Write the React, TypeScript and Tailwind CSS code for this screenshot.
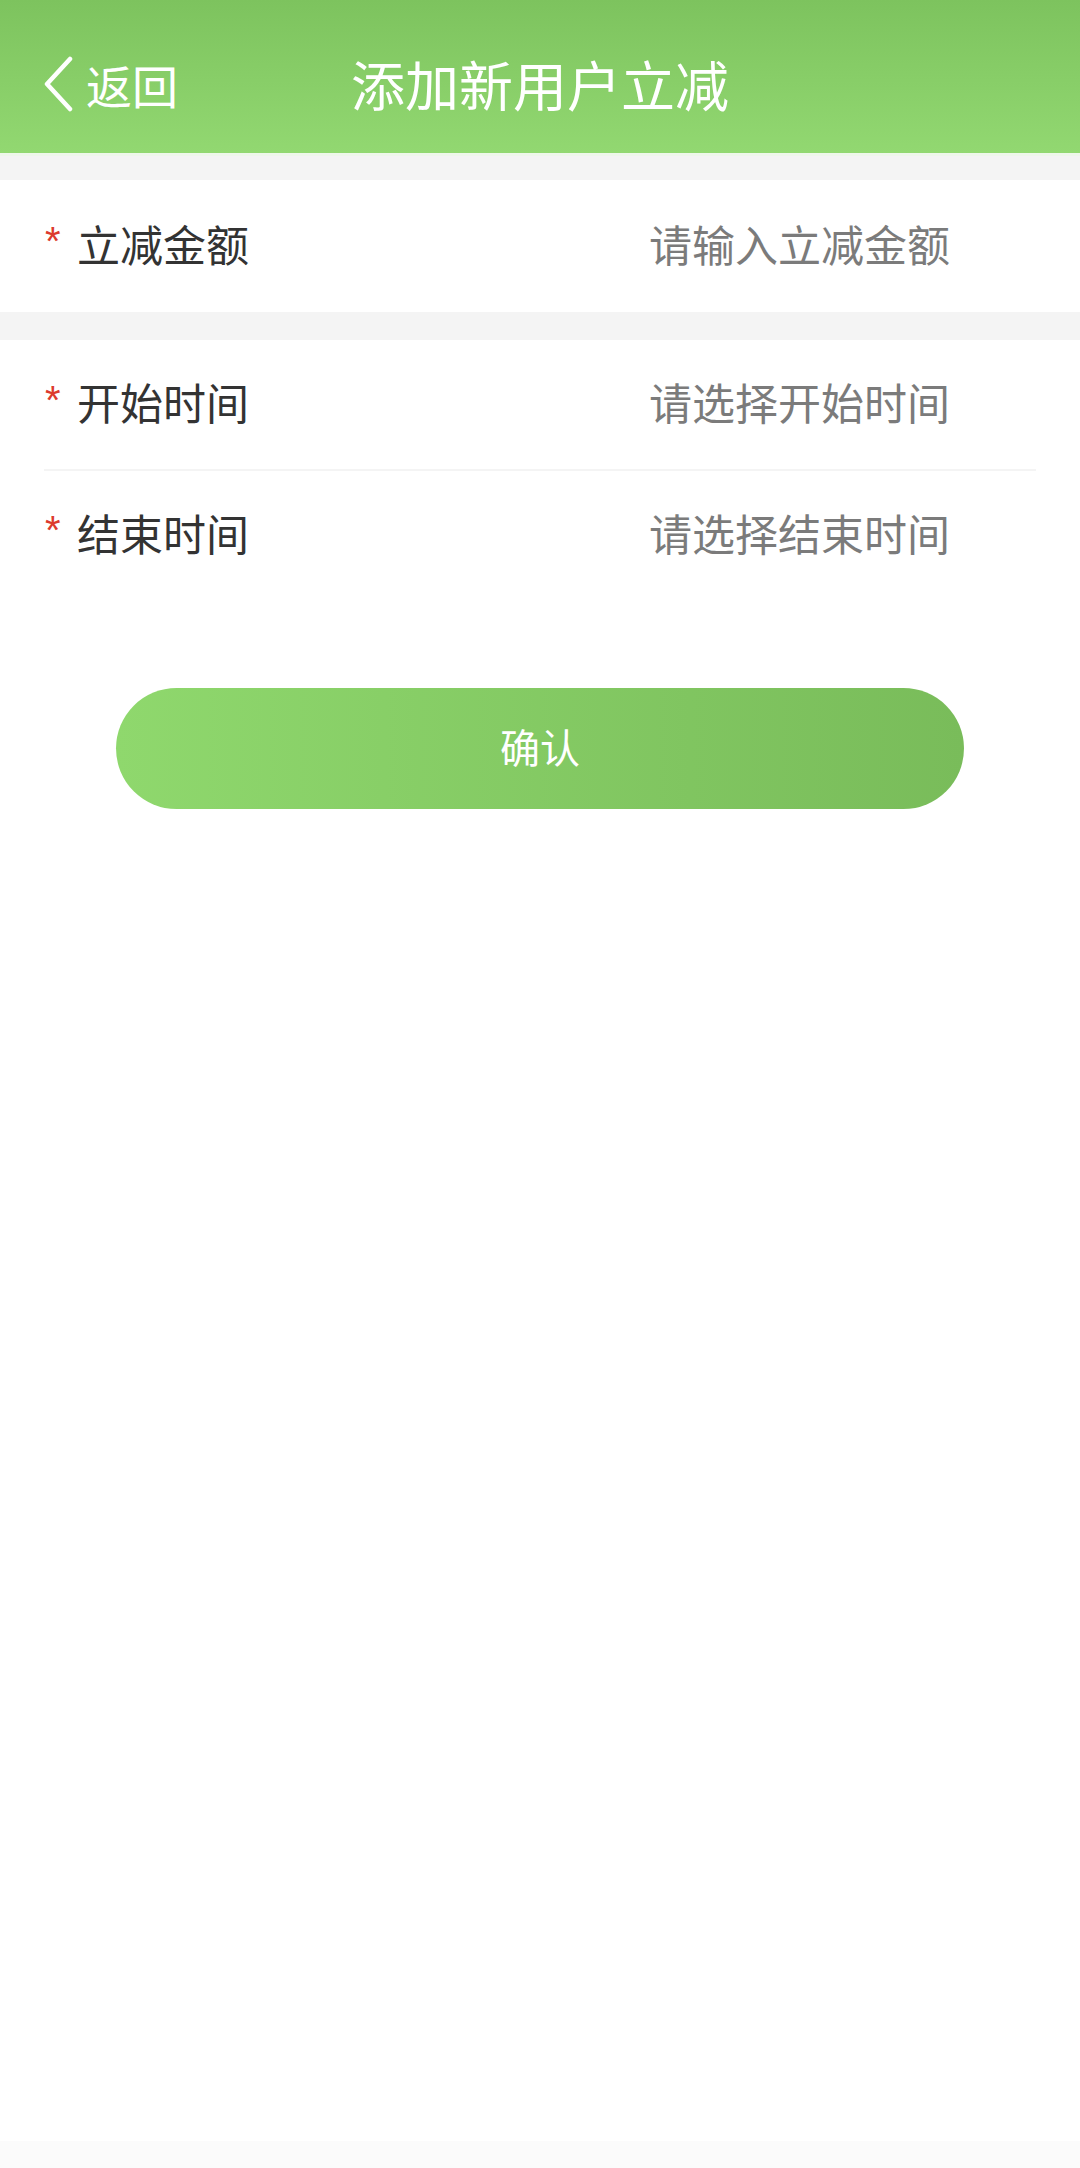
import React from "react";

const font = { fontFamily: '"Noto Sans CJK SC", "Noto Sans", sans-serif' };

function Row({ label, placeholder, height }: { label: string; placeholder: string; height: string }) {
  return (
    <div className={`flex items-center ${height} pl-[45px] pr-[130px] pb-[6px] bg-white`}>
      <span
        className="w-[32px] text-[40px] leading-none text-[#dc3a2d] self-center -mt-[4px]"
        style={{ fontFamily: '"Liberation Sans", Arial, sans-serif' }}
      >
        *
      </span>
      <span className="text-[43px] leading-none text-[#333333]">{label}</span>
      <span className="flex-1" />
      <span className="text-[43px] leading-none text-[#7b7b7b]">{placeholder}</span>
    </div>
  );
}

export default function App() {
  return (
    <div className="h-[2168px] flex flex-col bg-white" style={font}>
      <div className="h-[153px] bg-gradient-to-b from-[#7dc35e] to-[#92d871] relative flex items-center">
        <div className="flex items-center pl-[42px] pt-[14px]">
          <svg width="32" height="56" viewBox="0 0 32 56" fill="none">
            <polyline points="28,3 5,28 28,53" stroke="white" strokeWidth="4.5" strokeLinecap="round" strokeLinejoin="round" />
          </svg>
          <span className="ml-[12px] text-[46px] leading-none text-white">返回</span>
        </div>
        <div className="absolute inset-0 flex items-center justify-center pt-[14px] pointer-events-none">
          <span className="text-[54px] leading-none text-white">添加新用户立减</span>
        </div>
      </div>
      <div className="h-[3px] bg-[#eef7ea]" />
      <div className="h-[24px] bg-[#f4f4f4]" />
      <Row label="立减金额" placeholder="请输入立减金额" height="h-[132px]" />
      <div className="h-[28px] bg-[#f4f4f4]" />
      <Row label="开始时间" placeholder="请选择开始时间" height="h-[129px]" />
      <div className="mx-[44px] h-[2px] bg-[#f4f4f4]" />
      <Row label="结束时间" placeholder="请选择结束时间" height="h-[128px]" />
      <div className="flex justify-center mt-[89px]">
        <button className="w-[848px] h-[121px] rounded-full bg-gradient-to-r from-[#8fd86d] to-[#79bc5a] text-white text-[40px] leading-none pb-[6px]">
          确认
        </button>
      </div>
      <div className="flex-1" />
      <div className="h-[27px] bg-[#fbfbfb]" />
    </div>
  );
}
